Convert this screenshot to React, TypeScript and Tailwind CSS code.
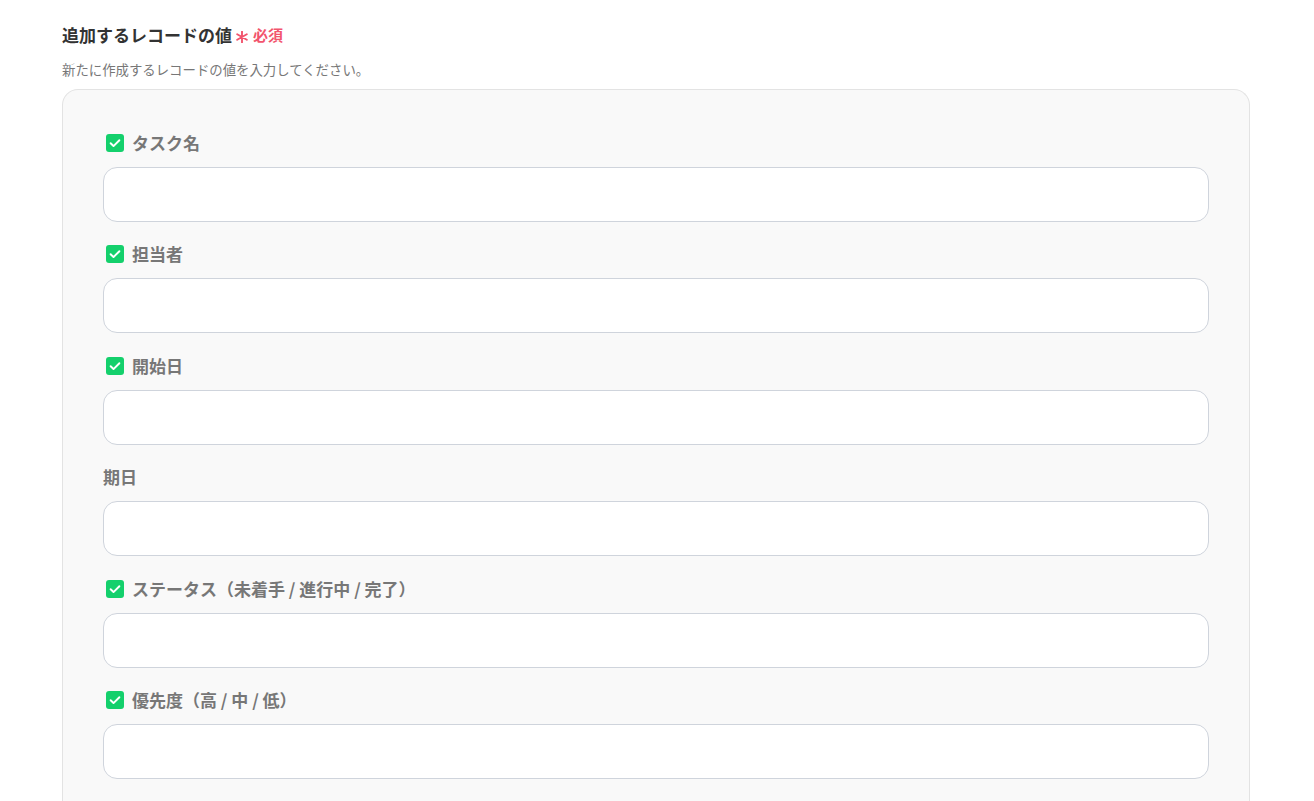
const fields = [
  { label: "タスク名", checked: true },
  { label: "担当者", checked: true },
  { label: "開始日", checked: true },
  { label: "期日", checked: false },
  { label: "ステータス（未着手 / 進行中 / 完了）", checked: true },
  { label: "優先度（高 / 中 / 低）", checked: true },
];

function CheckBox() {
  return (
    <span className="ml-[3px] flex h-[18px] w-[18px] items-center justify-center rounded-[3px] bg-[#14d06c]">
      <svg viewBox="0 0 16 16" className="h-[14px] w-[14px]" fill="none">
        <path d="M3 8.3l3.3 3.2L13 4.8" stroke="white" strokeWidth="2.2" strokeLinecap="round" strokeLinejoin="round" />
      </svg>
    </span>
  );
}

export default function App() {
  return (
    <div
      className="min-h-[801px] bg-white px-[62px] pt-[23px] text-[#333]"
      style={{ fontFamily: '"Noto Sans CJK JP", "Noto Sans", sans-serif' }}
    >
      <div className="flex items-center">
        <h2 className="text-[17px] font-bold leading-6 text-[#333]">追加するレコードの値</h2>
        <svg viewBox="0 0 12 12" className="ml-[4px] mt-[4px] h-[12px] w-[12px]" fill="none">
          <path d="M6 0.5v11M1.2 3.2l9.6 5.6M1.2 8.8l9.6-5.6" stroke="#f2546d" strokeWidth="1.9" strokeLinecap="round" />
        </svg>
        <span className="ml-[5px] text-[15px] font-bold leading-6 text-[#f2546d]">必須</span>
      </div>
      <p className="mt-[12px] text-[13.4px] leading-5 text-[#777]">新たに作成するレコードの値を入力してください。</p>

      <div className="mt-[10px] h-[720px] w-[1188px] rounded-t-[16px] border border-b-0 border-[#e3e3e3] bg-[#f9f9f9] px-10 pt-[41px]">
        <div className="flex flex-col gap-y-[20.4px]">
          {fields.map((f) => (
            <div key={f.label}>
              <label className="flex h-6 items-center gap-[8px]">
                {f.checked && <CheckBox />}
                <span className="text-[17px] font-bold leading-6 text-[#777]">{f.label}</span>
              </label>
              <input
                type="text"
                className="mt-[12px] block h-[55px] w-full rounded-[14px] border border-[#cfd4dc] bg-white px-4 text-[15px] outline-none"
              />
            </div>
          ))}
        </div>
      </div>
    </div>
  );
}
